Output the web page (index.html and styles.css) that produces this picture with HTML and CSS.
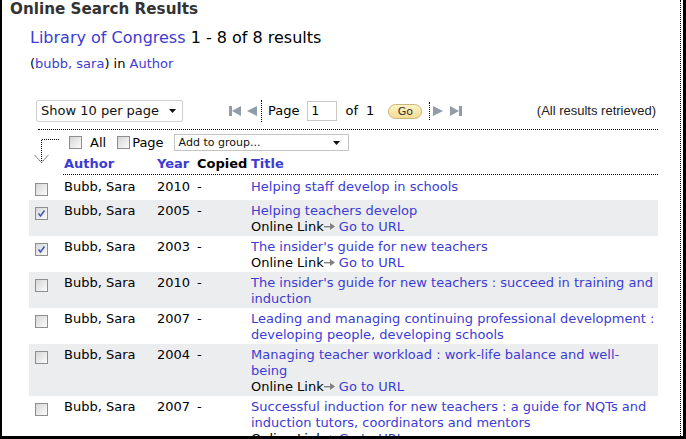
FILE: index.html
```html
<!DOCTYPE html>
<html lang="en">
<head>
<meta charset="utf-8">
<title>Online Search Results</title>
<link rel="stylesheet" href="styles.css">
</head>
<body>
<div class="frame">
  <div class="panel">
    <h1 class="title">Online Search Results</h1>
    <div class="summary"><a class="link" href="#">Library of Congress</a> 1 - 8 of 8 results</div>
    <div class="query">(<a class="link" href="#">bubb, sara</a>) in <a class="link" href="#">Author</a></div>

    <div class="content">
      <div class="toolbar">
        <div class="fake-select show-select">
          <span>Show 10 per page</span>
          <svg class="caret" width="7" height="4" viewBox="0 0 7 4"><polygon points="0,0 7,0 3.5,4" fill="#111"/></svg>
        </div>
        <svg class="icon first" width="12" height="10" viewBox="0 0 12 10"><rect x="0" y="0" width="3" height="10" fill="#909ca7"/><polygon points="12,0 3,5 12,10" fill="#909ca7"/></svg>
        <svg class="icon prev" width="10" height="10" viewBox="0 0 10 10"><polygon points="10,0 0,5 10,10" fill="#909ca7"/></svg>
        <span class="vsep"></span>
        <span class="pg-label">Page</span>
        <span class="pg-input">1</span>
        <span class="pg-of">of</span>
        <span class="pg-total">1</span>
        <span class="go">Go</span>
        <span class="vsep short"></span>
        <svg class="icon next" width="10" height="10" viewBox="0 0 10 10"><polygon points="0,0 10,5 0,10" fill="#909ca7"/></svg>
        <svg class="icon last" width="12" height="10" viewBox="0 0 12 10"><polygon points="0,0 9,5 0,10" fill="#909ca7"/><rect x="9" y="0" width="3" height="10" fill="#909ca7"/></svg>
        <span class="status">(All results retrieved)</span>
      </div>

      <div class="rule"></div>

      <div class="selectbar">
        <svg class="bracket" width="34" height="42" viewBox="0 0 34 42">
          <g stroke="#000" stroke-width="1" stroke-dasharray="1 1" fill="none" shape-rendering="crispEdges">
            <line x1="12.5" y1="6.5" x2="31" y2="6.5"/>
            <line x1="12.5" y1="6.5" x2="12.5" y2="29"/>
          </g>
          <g stroke="#000" stroke-width="1" stroke-dasharray="1.4 1.4" fill="none">
            <line x1="6" y1="22.5" x2="12.5" y2="29.5"/>
            <line x1="19" y1="22.5" x2="12.5" y2="29.5"/>
          </g>
        </svg>
        <div class="bulk">
          <span class="cb"></span>
          <span class="bulk-label all">All</span>
          <span class="cb page-cb"></span>
          <span class="bulk-label">Page</span>
          <div class="fake-select group-select">
            <span>Add to group...</span>
            <svg class="caret" width="7" height="4" viewBox="0 0 7 4"><polygon points="0,0 7,0 3.5,4" fill="#111"/></svg>
          </div>
        </div>
        <div class="thead">
          <a class="link" href="#">Author</a>
          <a class="link" href="#">Year</a>
          <span>Copied</span>
          <a class="link" href="#">Title</a>
        </div>
      </div>

      <div class="rows">
        <div class="row">
          <div class="c-cb"><span class="cb"></span></div>
          <div>Bubb, Sara</div><div>2010</div><div>-</div>
          <div class="c-title"><a class="link" href="#">Helping staff develop in schools</a></div>
        </div>
        <div class="row">
          <div class="c-cb"><span class="cb"><svg width="11" height="11" viewBox="0 0 11 11"><path d="M2.5 5.5 L4.5 8 L8.5 2.5" stroke="#4658c0" stroke-width="1.6" fill="none"/></svg></span></div>
          <div>Bubb, Sara</div><div>2005</div><div>-</div>
          <div class="c-title"><a class="link" href="#">Helping teachers develop</a><br>Online Link<svg class="arrow" width="11" height="7" viewBox="0 0 11 7"><rect x="0" y="3" width="7" height="1.4" fill="#808080"/><polygon points="6,0 11,3.6 6,7" fill="#808080"/></svg> <a class="link" href="#">Go to URL</a></div>
        </div>
        <div class="row">
          <div class="c-cb"><span class="cb"><svg width="11" height="11" viewBox="0 0 11 11"><path d="M2.5 5.5 L4.5 8 L8.5 2.5" stroke="#4658c0" stroke-width="1.6" fill="none"/></svg></span></div>
          <div>Bubb, Sara</div><div>2003</div><div>-</div>
          <div class="c-title"><a class="link" href="#">The insider's guide for new teachers</a><br>Online Link<svg class="arrow" width="11" height="7" viewBox="0 0 11 7"><rect x="0" y="3" width="7" height="1.4" fill="#808080"/><polygon points="6,0 11,3.6 6,7" fill="#808080"/></svg> <a class="link" href="#">Go to URL</a></div>
        </div>
        <div class="row">
          <div class="c-cb"><span class="cb"></span></div>
          <div>Bubb, Sara</div><div>2010</div><div>-</div>
          <div class="c-title"><a class="link" href="#">The insider's guide for new teachers : succeed in training and<br>induction</a></div>
        </div>
        <div class="row">
          <div class="c-cb"><span class="cb"></span></div>
          <div>Bubb, Sara</div><div>2007</div><div>-</div>
          <div class="c-title"><a class="link" href="#">Leading and managing continuing professional development :<br>developing people, developing schools</a></div>
        </div>
        <div class="row">
          <div class="c-cb"><span class="cb"></span></div>
          <div>Bubb, Sara</div><div>2004</div><div>-</div>
          <div class="c-title"><a class="link" href="#">Managing teacher workload : work-life balance and well-<br>being</a><br>Online Link<svg class="arrow" width="11" height="7" viewBox="0 0 11 7"><rect x="0" y="3" width="7" height="1.4" fill="#808080"/><polygon points="6,0 11,3.6 6,7" fill="#808080"/></svg> <a class="link" href="#">Go to URL</a></div>
        </div>
        <div class="row">
          <div class="c-cb"><span class="cb"></span></div>
          <div>Bubb, Sara</div><div>2007</div><div>-</div>
          <div class="c-title"><a class="link" href="#">Successful induction for new teachers : a guide for NQTs and<br>induction tutors, coordinators and mentors</a><br>Online Link<svg class="arrow" width="11" height="7" viewBox="0 0 11 7"><rect x="0" y="3" width="7" height="1.4" fill="#808080"/><polygon points="6,0 11,3.6 6,7" fill="#808080"/></svg> <a class="link" href="#">Go to URL</a></div>
        </div>
      </div>
    </div>
  </div>
</div>
</body>
</html>
```

FILE: styles.css
```css
* { box-sizing: border-box; }

html, body {
  margin: 0;
  padding: 0;
  background: #fff;
}

body {
  font-family: "DejaVu Sans", Verdana, sans-serif;
  font-size: 13px;
  line-height: 16px;
  color: #000;
}

.frame {
  width: 686px;
  height: 439px;
  border-left: 2px solid #000;
  border-right: 3px solid #000;
  border-bottom: 3px solid #000;
  overflow: hidden;
}

.panel {
  height: 100%;
  margin-right: 2px;
  border-right: 1px dotted #000;
}

.link {
  color: #3c3cd2;
  text-decoration: none;
}

.title {
  margin: 0;
  padding-left: 8px;
  font-size: 15.2px;
  line-height: 18px;
  font-weight: bold;
  color: #333;
}

.summary {
  margin: 10px 0 0 28px;
  font-size: 16px;
  line-height: 20px;
}

.query {
  margin: 8px 0 0 28px;
}

.content {
  margin-left: 27px;
  width: 629px;
  overflow: hidden;
}

/* toolbar */
.toolbar {
  margin-top: 28px;
  height: 22px;
  padding: 0 2px 0 7px;
  display: flex;
  align-items: center;
}

.fake-select {
  display: flex;
  align-items: center;
  justify-content: space-between;
  background: #fff;
}

.show-select {
  width: 147px;
  height: 22px;
  border: 1px solid #cfcfcf;
  border-radius: 2px;
  padding: 0 6px 0 4px;
  color: #111;
}

.group-select {
  width: 175px;
  height: 17px;
  border: 1px solid #c4c4c4;
  padding: 0 8px 0 4px;
  font-size: 11px;
  line-height: 14px;
  color: #111;
}

.icon { display: block; flex: none; }
.first { margin-left: 46px; }
.prev { margin-left: 6px; }

.vsep {
  width: 0;
  height: 22px;
  border-left: 1px dotted #000;
  margin-left: 4px;
}
.vsep.short {
  height: 18px;
  margin-left: 7px;
}

.pg-label { margin-left: 6px; }

.pg-input {
  margin-left: 8px;
  width: 30px;
  height: 20px;
  border: 1px solid #c8c8c8;
  font-size: 12px;
  line-height: 18px;
  padding-left: 3px;
}

.pg-of { margin-left: 8px; }
.pg-total { margin-left: 8px; }

.go {
  margin-left: 14px;
  width: 34px;
  height: 15px;
  border: 1px solid #cbb676;
  border-radius: 8px;
  background: linear-gradient(#fdf3c4, #f4dc93);
  font-size: 11px;
  line-height: 13px;
  text-align: center;
  color: #333;
}

.next { margin-left: 3px; }
.last { margin-left: 7px; }

.status {
  margin-left: auto;
  font-family: "Liberation Sans", Arial, sans-serif;
  font-size: 13px;
  color: #222;
}

.rule {
  margin: 7px 0 0 9px;
  border-top: 1px dotted #000;
}

/* select bar + header */
.selectbar {
  margin-top: 3px;
  display: grid;
  grid-template-columns: 34px 1fr;
  grid-template-rows: 19px auto;
}

.bracket {
  grid-column: 1;
  grid-row: 1 / 3;
  display: block;
}

.bulk {
  grid-column: 2;
  grid-row: 1;
  display: flex;
  align-items: center;
  padding-left: 6px;
}

.bulk-label { margin-left: 2px; }
.bulk-label.all { margin-left: 8px; margin-right: 11px; }
.bulk .group-select { margin-left: 10px; }

.thead {
  grid-column: 2;
  grid-row: 2;
  display: grid;
  grid-template-columns: 93px 40px 54px 1fr;
  padding: 4px 0 2px 1px;
  border-bottom: 1px dotted #000;
  font-weight: bold;
  white-space: nowrap;
}

/* checkbox */
.cb {
  display: inline-block;
  flex: none;
  width: 13px;
  height: 13px;
  border: 1px solid #8e8e8e;
  background: linear-gradient(135deg, #d6d6d6 0%, #ececec 60%, #fbfbfb 100%);
  vertical-align: top;
}
.cb svg { display: block; }

/* rows */
.rows { margin-top: 1px; }

.row {
  display: grid;
  grid-template-columns: 35px 93px 40px 54px 1fr;
  white-space: nowrap;
}
.row:nth-child(even) { background: #ecedef; }

.row > div { padding: 3px 0 1px; }
.row > .c-cb { padding: 7px 0 4px 6px; }
.c-cb .cb { display: block; }

.arrow {
  display: inline-block;
  vertical-align: 1px;
}
```
